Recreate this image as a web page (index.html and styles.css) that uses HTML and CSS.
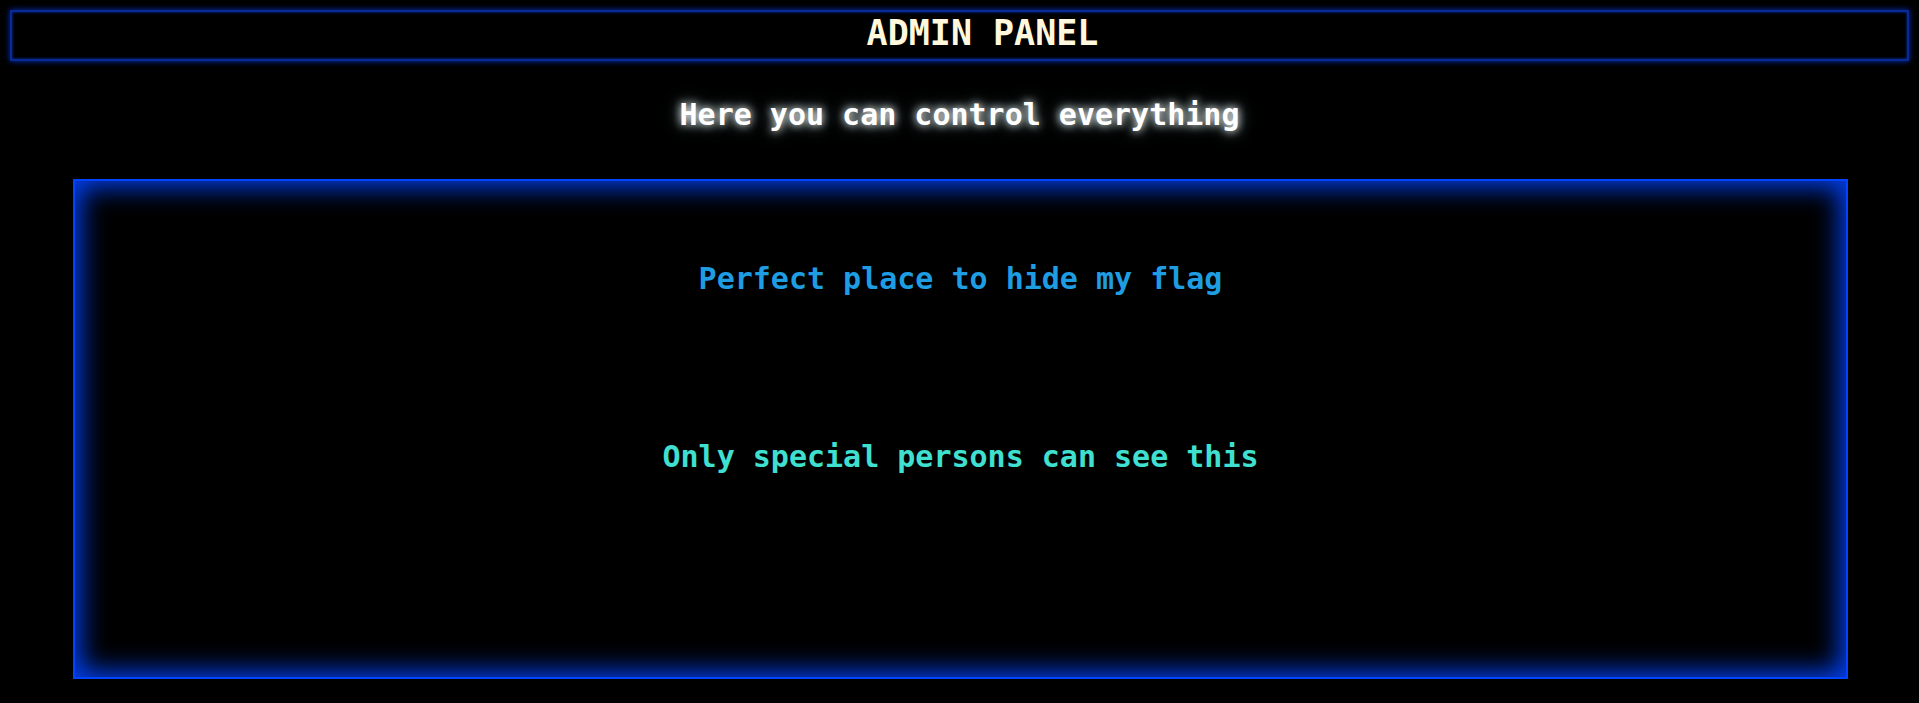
FILE: index.html
```html
<!DOCTYPE html>
<html lang="en">
<head>
<meta charset="utf-8">
<title>Admin Panel</title>
<link rel="stylesheet" href="styles.css">
</head>
<body>
  <header class="topbar">
    <h1 class="title">ADMIN PANEL</h1>
  </header>
  <p class="subtitle">Here you can control everything</p>
  <main class="panel">
    <h2 class="flag-line">Perfect place to hide my flag</h2>
    <h3 class="special-line">Only special persons can see this</h3>
  </main>
</body>
</html>
```
FILE: styles.css
```css
html, body {
  background: #000;
}
body {
  margin: 0;
  padding: 10px 0 0;
  font-family: "DejaVu Sans Mono", "Liberation Mono", monospace;
  font-weight: bold;
}
.topbar {
  margin: 0 10px;
  border: 2px solid #082a94;
  box-shadow: 0 0 6px #0030c0, inset 0 0 3px #0030c0;
  height: 47px;
  padding-left: 46px;
}
.title {
  margin: 0;
  text-align: center;
  color: #fff8dc;
  font-size: 35px;
  line-height: 43px;
  font-weight: bold;
}
.subtitle {
  margin: 36px 0 0;
  text-align: center;
  color: #fff;
  font-size: 30px;
  line-height: 36px;
  text-shadow: 0 0 8px #fff, 0 0 16px rgba(200,255,255,0.6);
}
.panel {
  box-sizing: border-box;
  margin: 46px 71px 0 73px;
  height: 500px;
  border: 2px solid #0044ff;
  box-shadow: inset 0 0 26px 6px #0040f0;
  padding-top: 80px;
  text-align: center;
}
.flag-line {
  margin: 0;
  color: #1e9de2;
  font-size: 30px;
  line-height: 36px;
}
.special-line {
  margin: 142px 0 0;
  color: #40e0d0;
  font-size: 30px;
  line-height: 36px;
}
```
